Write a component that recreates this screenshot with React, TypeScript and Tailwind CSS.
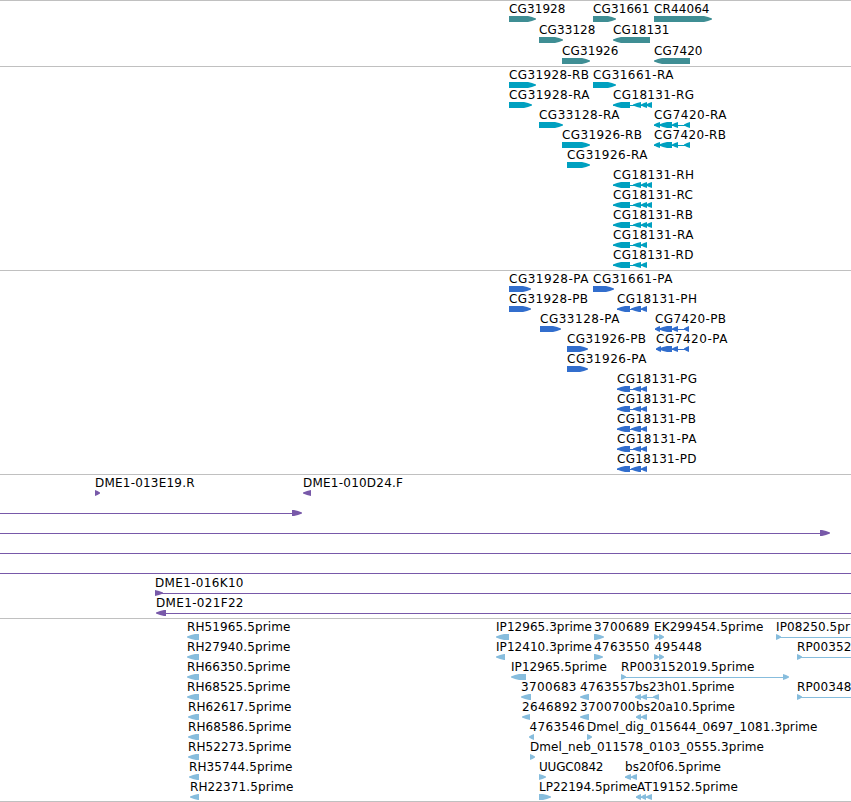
type Dir = "fwd" | "rev";

type Feature = {
  label?: string;
  x: number;
  dir: Dir;
  exons: [number, number][];
  // connecting line, drawn behind the exons
  span?: [number, number];
};

type TrackData = {
  name: string;
  color: string;
  rowClass: string;
  padClass: string;
  rows: Feature[][];
};

const VIEW_END = 851;

// advance of each glyph in px, so that labels keep a fixed width
const ADVANCE: Record<string, number> = {
  "-": 7.5, ".": 4, _: 5.5, A: 8.5, B: 8, C: 8, D: 8.5, E: 7, F: 7, G: 9, H: 9, I: 2.5, K: 8, L: 5, M: 10,
  P: 7, R: 8, T: 6, U: 8, a: 7, b: 8, d: 8, e: 7, f: 4, g: 8, h: 7.5, i: 3.5, l: 3.5, m: 11.5,
  n: 8, p: 8, r: 5, s: 5.5,
};

function labelWidth(label: string) {
  return [...label].reduce((sum, c) => sum + (ADVANCE[c] ?? 8), 0) - 0.5;
}

function fwd(label: string | undefined, x: number, ...exons: [number, number][]): Feature {
  return { label, x, dir: "fwd", exons };
}

function rev(label: string | undefined, x: number, ...exons: [number, number][]): Feature {
  return { label, x, dir: "rev", exons, span: exons.length > 1 ? [exons[0][0], exons[exons.length - 1][1]] : undefined };
}

function cg18131(suffix: string, long: boolean): Feature {
  const exons: [number, number][] = [[613, 630], [633, 641], [641, 647]];
  if (long) exons.push([646, 652]);
  return rev(`CG18131-${suffix}`, 613, ...exons);
}

function cg18131p(suffix: string, wide: boolean): Feature {
  return rev(`CG18131-${suffix}`, 617, [617, 630], [wide ? 631 : 633, 641], [641, 647]);
}

const tracks: TrackData[] = [
  {
    name: "gene",
    color: "#3f8e94",
    rowClass: "h-[21px]",
    padClass: "pb-[2px]",
    rows: [
      [fwd("CG31928", 509, [509, 536]), fwd("CG31661", 593, [593, 616]), fwd("CR44064", 654, [654, 712])],
      [fwd("CG33128", 539, [539, 563]), rev("CG18131", 613, [613, 650])],
      [fwd("CG31926", 562, [562, 590]), rev("CG7420", 654, [654, 690])],
    ],
  },
  {
    name: "transcript",
    color: "#00a0c0",
    rowClass: "h-5",
    padClass: "pb-[3px]",
    rows: [
      [fwd("CG31928-RB", 509, [509, 536]), fwd("CG31661-RA", 593, [593, 616])],
      [fwd("CG31928-RA", 509, [509, 532]), cg18131("RG", true)],
      [fwd("CG33128-RA", 539, [539, 563]), rev("CG7420-RA", 654, [654, 660], [659, 672], [672, 678], [684, 690])],
      [fwd("CG31926-RB", 562, [562, 590]), rev("CG7420-RB", 654, [654, 660], [659, 672], [672, 678], [684, 690])],
      [fwd("CG31926-RA", 567, [567, 590])],
      [cg18131("RH", true)],
      [cg18131("RC", true)],
      [cg18131("RB", true)],
      [cg18131("RA", false)],
      [cg18131("RD", false)],
    ],
  },
  {
    name: "cds",
    color: "#326ecd",
    rowClass: "h-5",
    padClass: "pb-[3px]",
    rows: [
      [fwd("CG31928-PA", 509, [509, 531]), fwd("CG31661-PA", 593, [593, 614])],
      [fwd("CG31928-PB", 509, [509, 531]), cg18131p("PH", true)],
      [fwd("CG33128-PA", 540, [540, 561]), rev("CG7420-PB", 655, [655, 660], [659, 672], [672, 678], [684, 689])],
      [fwd("CG31926-PB", 567, [567, 588]), rev("CG7420-PA", 656, [656, 661], [659, 672], [672, 678], [684, 689])],
      [fwd("CG31926-PA", 567, [567, 588])],
      [cg18131p("PG", false)],
      [cg18131p("PC", false)],
      [cg18131p("PB", true)],
      [cg18131p("PA", false)],
      [cg18131p("PD", true)],
    ],
  },
  {
    name: "bac",
    color: "#7859a9",
    rowClass: "h-5",
    padClass: "pb-[3px]",
    rows: [
      [fwd("DME1-013E19.R", 95, [95, 100]), rev("DME1-010D24.F", 303, [303, 311])],
      [{ x: 0, dir: "fwd", exons: [[292, 302]], span: [0, 292] }],
      [{ x: 0, dir: "fwd", exons: [[820, 830]], span: [0, 820] }],
      [{ x: 0, dir: "fwd", exons: [], span: [0, VIEW_END] }],
      [{ x: 0, dir: "fwd", exons: [], span: [0, VIEW_END] }],
      [{ label: "DME1-016K10", x: 155, dir: "fwd", exons: [[155, 163]], span: [155, VIEW_END] }],
      [{ label: "DME1-021F22", x: 156, dir: "rev", exons: [[156, 166]], span: [158, VIEW_END] }],
    ],
  },
  {
    name: "est",
    color: "#87bddd",
    rowClass: "h-5",
    padClass: "pb-[2px]",
    rows: [
      [
        rev("RH51965.5prime", 187, [187, 199]),
        rev("IP12965.3prime", 496, [496, 509]),
        fwd("3700689", 594, [594, 604]),
        fwd("EK299454.5prime", 654, [654, 659], [659, 664]),
        { label: "IP08250.5pr", x: 776, dir: "fwd", exons: [[776, 781]], span: [776, VIEW_END] },
      ],
      [
        rev("RH27940.5prime", 187, [187, 199]),
        rev("IP12410.3prime", 496, [496, 505]),
        fwd("4763550", 594, [594, 603]),
        fwd("495448", 654.5, [654, 659], [659, 664]),
        { label: "RP00352", x: 797, dir: "fwd", exons: [[797, 802]], span: [797, VIEW_END] },
      ],
      [
        rev("RH66350.5prime", 187, [187, 199]),
        rev("IP12965.5prime", 511, [511, 526]),
        { label: "RP003152019.5prime", x: 621, dir: "fwd", exons: [[621, 626], [783, 789]], span: [621, 784] },
      ],
      [
        rev("RH68525.5prime", 187, [187, 199]),
        rev("3700683", 521, [521, 531]),
        rev("4763557", 580, [580, 589]),
        rev("bs23h01.5prime", 635, [635, 641], [641, 647], [653, 659]),
        { label: "RP00348", x: 797, dir: "fwd", exons: [[797, 802]], span: [797, VIEW_END] },
      ],
      [
        rev("RH62617.5prime", 188, [188, 199]),
        rev("2646892", 522, [522, 530]),
        rev("3700700", 580, [580, 589]),
        rev("bs20a10.5prime", 636, [636, 641], [641, 647]),
      ],
      [
        rev("RH68586.5prime", 188, [188, 199]),
        rev("4763546", 529.5, [529, 534]),
        fwd("Dmel_dig_015644_0697_1081.3prime", 587, [587, 592]),
      ],
      [rev("RH52273.5prime", 188, [188, 199]), fwd("Dmel_neb_011578_0103_0555.3prime", 530, [530, 535])],
      [
        rev("RH35744.5prime", 189, [189, 199]),
        fwd("UUGC0842", 539, [539, 546]),
        rev("bs20f06.5prime", 625, [625, 631], [631, 637]),
      ],
      [
        rev("RH22371.5prime", 190, [190, 199]),
        fwd("LP22194.5prime", 539, [539, 551]),
        rev("AT19152.5prime", 637, [636, 641], [641, 646], [646, 652]),
      ],
    ],
  },
];

// bullet-shaped head on a flat bar, narrow exons are all head
function exonPoints([start, end]: [number, number], dir: Dir) {
  const head = Math.min(8, end - start);
  const tip = dir === "fwd" ? end : start;
  const tail = dir === "fwd" ? start : end;
  const back = dir === "fwd" ? -1 : 1;
  const neck = tip + back * head;
  const shoulder = tip + back * head * 0.5;
  return `${tail},15 ${neck},15 ${shoulder},16 ${tip},17.5 ${tip},18.5 ${shoulder},20 ${neck},21 ${tail},21`;
}

function FeatureGlyph({ feature, color }: { feature: Feature; color: string }) {
  const { label, x, dir, exons, span } = feature;
  return (
    <g>
      {span ? (
        <rect x={span[0]} y={18} width={span[1] - span[0]} height={1} fill={color} shapeRendering="crispEdges" />
      ) : null}
      {exons.map((exon) => (
        <polygon key={exon[0]} points={exonPoints(exon, dir)} fill={color} />
      ))}
      {label ? (
        <text x={x} y={12} textLength={labelWidth(label)} fill="#000">
          {label}
        </text>
      ) : null}
    </g>
  );
}

function Track({ track }: { track: TrackData }) {
  return (
    <section className={`border-t border-[#c0c0c0] ${track.padClass}`}>
      {track.rows.map((row, i) => (
        <svg key={i} className={`block w-full overflow-visible ${track.rowClass}`}>
          {row.map((feature, j) => (
            <FeatureGlyph key={j} feature={feature} color={track.color} />
          ))}
        </svg>
      ))}
    </section>
  );
}

export default function App() {
  return (
    <main className="h-[802px] w-[851px] overflow-hidden border-b border-[#c0c0c0] bg-white font-['DejaVu_Sans',sans-serif] text-[12px]">
      {tracks.map((track) => (
        <Track key={track.name} track={track} />
      ))}
    </main>
  );
}
